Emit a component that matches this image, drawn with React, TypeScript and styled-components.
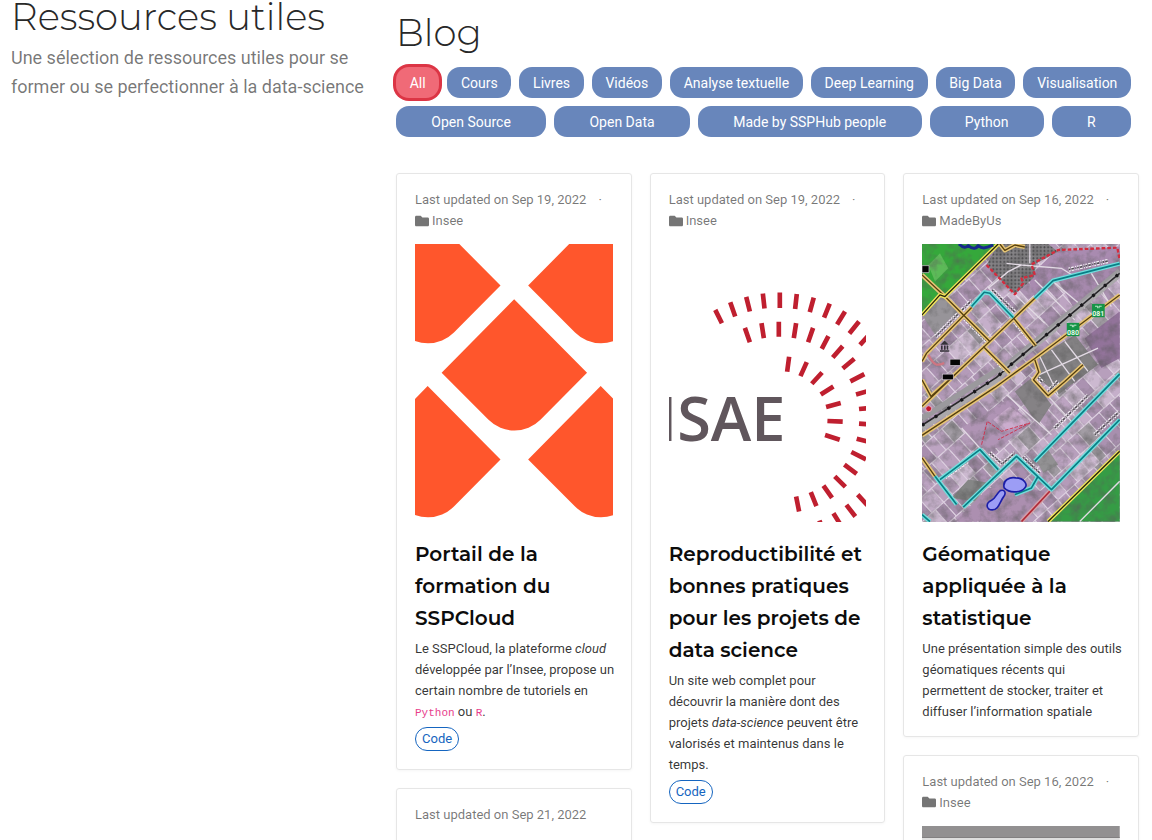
import React from 'react';
import styled, { createGlobalStyle } from 'styled-components';
import { FaFolder } from 'react-icons/fa';

const GlobalStyle = createGlobalStyle`
  *, *::before, *::after { box-sizing: border-box; }
  body {
    margin: 0;
    background: #fff;
    color: rgba(0, 0, 0, 0.8);
    font-family: Roboto, "Liberation Sans", sans-serif;
  }
`;

const headingFont = 'Montserrat, Inter, sans-serif';

const Page = styled.div`
  display: grid;
  grid-template-columns: minmax(0, 1fr) minmax(0, 2fr);
  align-items: start;
  height: 100vh;
  overflow: hidden;
`;

const Intro = styled.header`
  padding: 0 12px 0 11px;
`;

const Heading = styled.h1`
  margin: 0;
  font-family: ${headingFont};
  font-size: 37px;
  font-weight: 300;
  line-height: 34px;
  white-space: nowrap;
  color: #282828;
`;

const Subtitle = styled.p`
  margin: 9px 0 0;
  font-size: 18px;
  line-height: 29px;
  color: rgba(0, 0, 0, 0.54);
`;

const Main = styled.main`
  padding: 16px 13px 0 12px;
`;

const Toolbar = styled.div`
  display: flex;
  flex-wrap: wrap;
  gap: 8px;
  margin: 17px 8px 36px 0;
`;

const FilterButton = styled.button<{ $active?: boolean }>`
  flex: 1 1 auto;
  height: 31px;
  padding: 0 12px;
  border: 0;
  border-radius: 13px;
  background: ${(p) => (p.$active ? '#f06a77' : '#6886bb')};
  box-shadow: ${(p) => (p.$active ? '0 0 0 3px #dc3545' : 'none')};
  color: #fff;
  font: 400 14px/24px Roboto, "Liberation Sans", sans-serif;
  white-space: nowrap;
  cursor: pointer;
`;

const Columns = styled.div`
  display: grid;
  grid-template-columns: repeat(3, minmax(0, 1fr));
  align-items: start;
  gap: 18px;
`;

const Column = styled.div`
  display: flex;
  flex-direction: column;
  gap: 18px;
`;

const Card = styled.article`
  padding: 15px 18px 14px;
  border: 1px solid #e6e6e6;
  border-radius: 3px;
  box-shadow: 0 1px 3px rgba(0, 0, 0, 0.04);
`;

const Meta = styled.div`
  font-size: 13px;
  line-height: 21px;
  color: rgba(0, 0, 0, 0.54);
  white-space: nowrap;
`;

const Dot = styled.span`
  margin-left: 12px;
`;

const Category = styled.a`
  display: flex;
  align-items: center;
  gap: 3px;
  color: inherit;
  text-decoration: none;
`;

const Picture = styled.svg`
  display: block;
  width: 100%;
  height: auto;
  margin-top: 13px;
`;

const Title = styled.h3`
  margin: 16px 0 4px;
  font-family: ${headingFont};
  font-size: 20px;
  font-weight: 600;
  line-height: 32px;
  color: #0c0c0c;
`;

const Summary = styled.p`
  margin: 0 -6px 0 0;
  font-size: 13px;
  line-height: 21px;
`;

const Mono = styled.code`
  font-family: "Liberation Mono", monospace;
  font-size: 11px;
  line-height: 1;
  color: #e83e8c;
`;

const CodeLink = styled.a`
  display: block;
  width: fit-content;
  margin: 5px 0 4px;
  padding: 0 6px;
  border: 1px solid #1565c0;
  border-radius: 12px;
  font-size: 13px;
  line-height: 22px;
  color: #1565c0;
  text-decoration: none;
`;

const SspCloudLogo = () => (
  <Picture viewBox="75 237 594 834" role="img" aria-label="SSPCloud">
    {[[0, 0], [-260, -262], [260, -262], [-260, 261], [260, 261]].map(([x, y]) => (
      <path
        key={`${x},${y}`}
        transform={`translate(${x} ${y})`}
        fill="#ff562c"
        d="M373 403 L592 624 L452 765 A110 110 0 0 1 296 765 L155 624 Z"
      />
    ))}
  </Picture>
);

const rays = [
  // outer ring
  [211, 435, 231, 475], [256, 412, 271, 455], [304, 396, 315, 440], [354, 386, 359, 431],
  [405, 383, 405, 429], [456, 387, 451, 432], [507, 398, 495, 442], [555, 416, 538, 458],
  [601, 440, 577, 479], [643, 470, 614, 506], [675, 508, 646, 540],
  [668, 1022, 639, 990], [632, 1056, 605, 1021], [590, 1085, 566, 1046], [540, 1110, 524, 1068],
  // middle ring
  [300, 489, 315, 532], [350, 475, 357, 520], [402, 471, 402, 516], [454, 475, 447, 520],
  [505, 489, 490, 532], [551, 514, 531, 552], [594, 544, 564, 578], [629, 582, 594, 611],
  [659, 628, 617, 650], [680, 676, 634, 689], [690, 728, 643, 733], [690, 780, 643, 777],
  [682, 834, 636, 822], [664, 884, 620, 862], [636, 928, 599, 900], [602, 967, 570, 935],
  [562, 1000, 536, 963], [515, 1025, 498, 983], [463, 1041, 454, 996],
  // inner ring
  [433, 576, 427, 621], [486, 592, 467, 634], [532, 623, 501, 657], [566, 665, 528, 689],
  [588, 715, 544, 727], [594, 771, 548, 769], [585, 825, 541, 811],
];

const EnsaeLogo = () => (
  <Picture viewBox="72 237 594 834" role="img" aria-label="ENSAE">
    <path
      d={rays.map(([a, b, c, d]) => `M${a} ${b}L${c} ${d}`).join('')}
      stroke="#bf1f2f"
      strokeWidth="14"
      fill="none"
    />
    <text
      x="422"
      y="830"
      textAnchor="end"
      fill="#60565c"
      fontFamily='"Open Sans", sans-serif'
      fontSize="184"
      fontWeight="600"
    >
      NSAE
    </text>
  </Picture>
);

// Repeatable pseudo-random values for the land parcels of the map.
const makeRandom = (seed: number) => () => {
  seed = (seed * 16807) % 2147483647;
  return seed / 2147483647;
};

const buildParcels = () => {
  const random = makeRandom(77);
  const tones = ['#b49bb9', '#ab92b1', '#bda4c2', '#c5afca', '#a88fae', '#b79fbc', '#a39da5', '#ccb9d0'];
  const parcels: { x: number; y: number; w: number; h: number; fill: string }[] = [];
  for (let y = -672; y < 672; y += 56) {
    let x = -660;
    while (x < 660) {
      const w = 24 + Math.round(random() * 26);
      parcels.push({ x, y, w, h: 56, fill: tones[Math.floor(random() * tones.length)] });
      x += w;
    }
  }
  return parcels;
};

const parcels = buildParcels();

const yellowRoads = [
  'M21 120L90 185', 'M35 355L170 218', 'M35 355L21 380', 'M90 185L225 320', 'M130 410L360 190',
  'M130 410L21 515', 'M295 248L362 332', 'M205 335L285 415', 'M21 602L240 458L360 371L615 180',
  'M360 375L372 412L356 435L400 483L450 440L505 390', 'M21 435L48 485L130 410', 'M21 670L60 725',
  'M255 27L270 46L300 30L330 36',
];

const tealRoads = [
  'M170 215L208 172L225 175L295 248', 'M360 190L415 137L615 86', 'M615 418L360 680',
  'M615 555L410 765L305 665L145 818', 'M75 735L195 645L250 705', 'M60 725L125 810',
  'M370 725L350 760L300 780', 'M21 840L45 861',
];

// Street names too small to read: a speckled line along each street.
const streetNames = [
  'M62 305L172 195', 'M462 104L580 78', 'M150 252L222 325', 'M232 165L300 232', 'M300 262L345 315',
  'M90 728L160 678', 'M420 580L520 482', 'M540 600L615 530', 'M225 655L262 688L300 655',
  'M325 668L375 715', 'M215 345L270 405', 'M400 470L430 440', 'M370 430L385 445',
];

const GeoMap = () => (
  <Picture viewBox="21 27 594 834" role="img" aria-label="Carte">
    <defs>
      <filter id="aerial" x="0" y="0" width="100%" height="100%">
        <feTurbulence type="fractalNoise" baseFrequency="0.03" numOctaves="4" seed="8" />
        <feColorMatrix values="0 0 0 0 0.1  0 0 0 0 0.1  0 0 0 0 0.1  1.2 0 0 0 -0.48" />
      </filter>
      <pattern id="orchard" width="11" height="11" patternUnits="userSpaceOnUse">
        <rect width="11" height="11" fill="#858386" />
        <circle cx="4" cy="4" r="3" fill="#454447" />
      </pattern>
    </defs>
    <rect x="21" y="27" width="594" height="834" fill="#b49bb9" />
    <g transform="translate(318 444) rotate(-42)" stroke="#ddd0e0" strokeWidth="3">
      {parcels.map((p) => (
        <rect key={`${p.x},${p.y}`} x={p.x} y={p.y} width={p.w} height={p.h} fill={p.fill} />
      ))}
    </g>
    <path d="M420 50L615 35V90L420 135L360 190L340 130Z" fill="#a98bb0" />
    <path d="M430 135L615 88V120L480 225Z" fill="#a689ad" />
    <path d="M510 310L615 230V370L560 400Z" fill="#92739a" />
    <path d="M375 365L480 300L550 390L430 480L370 430Z" fill="#838183" />
    <path d="M300 470L350 430L410 510L370 570Z" fill="#858285" />
    <path d="M140 580L275 495L350 565L250 640L195 640Z" fill="#b094b5" />
    <path d="M235 555L285 515L350 565L270 590Z" fill="#cbadce" />
    <path d="M110 790L160 735L225 745L180 800Z" fill="#858686" />
    <path d="M365 680L400 645L430 690L385 715Z" fill="#929193" />
    <path d="M330 760L410 775L320 861H120L220 760Z" fill="#ac8fb0" />
    <path d="M21 240L80 185L135 220L60 300Z" fill="#979499" />
    <path d="M250 27H400L430 50L365 85L355 130L300 178L215 90Z" fill="url(#orchard)" />
    <path d="M21 27H250L90 185L75 180L21 235Z" fill="#35a83b" />
    <path d="M40 90L75 55L100 100L60 140Z" fill="#5cba58" />
    <path d="M615 650V861H400Z" fill="#359c45" />
    <rect x="21" y="27" width="594" height="834" filter="url(#aerial)" />

    <g fill="none" stroke="#e2dae4" strokeWidth="4">
      <path d="M360 135L480 255M415 140L510 220M300 178L390 265M480 225L615 110M530 115L590 215" />
      <path d="M275 85L320 90L440 100L480 125M345 27V85M220 160L280 110L320 90" />
      <path d="M375 365L430 480M410 345L480 440M450 320L520 410M350 430L550 340" />
      <path d="M275 480L410 600M140 580L240 690M350 430L470 560M615 740L495 861" />
    </g>
    <g fill="none">
      <path d="M21 552L225 420L290 380L615 108" stroke="#9b999d" strokeWidth="17" />
      <path d="M21 580L245 435L290 390L615 118" stroke="#aaa8ab" strokeWidth="18" />
      <path d="M21 572L245 428L290 388L615 115" stroke="#29272b" strokeWidth="5" />
      <path d="M21 572L245 428L290 388L615 115" stroke="#161518" strokeWidth="10" strokeDasharray="8 38" />
    </g>
    <g fill="none" strokeDasharray="5 3 8 4 3 3">
      <path d={streetNames.join('')} stroke="#f1ecf3" strokeWidth="13" />
      <path d={streetNames.join('')} stroke="#514c54" strokeWidth="5" />
    </g>
    <g fill="none" strokeLinejoin="round">
      <path d={yellowRoads.join('')} stroke="#e6c577" strokeWidth="13" />
      <path d={yellowRoads.join('')} stroke="#57400d" strokeWidth="4" />
      <path d={tealRoads.join('')} stroke="#72dedd" strokeWidth="13" />
      <path d={tealRoads.join('')} stroke="#087f86" strokeWidth="5" />
      <path d="M250 27L90 185L75 180L21 240M615 650L400 861" stroke="#f1e75a" strokeWidth="12" />
      <path d="M250 27L90 185L75 180L21 240M615 650L400 861" stroke="#28250c" strokeWidth="4" />
      <path d="M405 770L320 861" stroke="#d5a0a9" strokeWidth="13" />
      <path d="M405 770L320 861" stroke="#b12835" strokeWidth="5" />
      <path
        d="M215 90L300 178L325 145L320 130L360 120L350 88L430 45L608 38L615 75"
        stroke="#d32c3e"
        strokeWidth="7"
        strokeDasharray="11 6"
      />
      <path
        d="M200 630L217 560L260 590L345 565L250 615"
        stroke="#cc3552"
        strokeWidth="3"
        strokeDasharray="11 4"
      />
      <path d="M40 360C60 400 70 390 88 385" stroke="#cf7683" strokeWidth="7" />
      <path d="M132 27C145 40 155 38 160 32C175 45 185 40 190 32C205 45 220 36 235 30" stroke="#16288d" strokeWidth="9" />
    </g>
    <g fill="#9c9df5" stroke="#1b1ea8" strokeWidth="5">
      <path d="M268 760C262 735 285 727 303 730C328 730 340 750 330 760C318 774 285 778 268 760Z" />
      <path d="M256 768C270 764 275 775 266 787C255 800 252 826 232 826C212 825 212 805 230 797C244 790 246 775 256 768Z" />
    </g>
    <g>
      <rect x="532" y="207" width="38" height="40" fill="#159447" />
      <rect x="456" y="264" width="38" height="40" fill="#159447" />
      <path d="M541 214H549V220M553 220V214H561M465 271H473V277M477 277V271H485" fill="none" stroke="#bfe8cc" strokeWidth="3" />
      <g fill="#e6f8eb" fontFamily="Roboto, sans-serif" fontSize="21" fontWeight="700" textAnchor="middle">
        <text x="551" y="243">081</text>
        <text x="475" y="300">080</text>
      </g>
    </g>
    <g fill="#050505" stroke="#d6cad8" strokeWidth="2">
      <rect x="105" y="373" width="31" height="19" />
      <rect x="82" y="418" width="33" height="17" />
      <path d="M21 92H42V113H21Z" />
    </g>
    <path
      d="M76 330L89 317L102 330ZM78 332H83V345H78ZM87 332H92V345H87ZM95 332H100V345H95ZM75 346H103V351H75Z"
      fill="#343238"
    />
    <circle cx="41" cy="522" r="9" fill="#c5162d" stroke="#ddb7c6" strokeWidth="3" />
  </Picture>
);

const GreyPicture = () => (
  <Picture viewBox="0 0 198 278" role="img" aria-label="Aperçu">
    <rect width="198" height="278" fill="#dedede" />
    <rect width="198" height="12" fill="#929091" />
    <rect y="11" width="198" height="1" fill="#838182" />
  </Picture>
);

interface CardMetaProps {
  date: string;
  category?: string;
}

const CardMeta = ({ date, category }: CardMetaProps) => (
  <Meta>
    Last updated on {date}
    {category && (
      <>
        <Dot>·</Dot>
        <Category href="#">
          <FaFolder size={14} aria-hidden />
          {category}
        </Category>
      </>
    )}
  </Meta>
);

const filters = [
  'All', 'Cours', 'Livres', 'Vidéos', 'Analyse textuelle', 'Deep Learning', 'Big Data',
  'Visualisation', 'Open Source', 'Open Data', 'Made by SSPHub people', 'Python', 'R',
];

export default function App() {
  const [active, setActive] = React.useState('All');

  return (
    <>
      <GlobalStyle />
      <Page>
        <Intro>
          <Heading>Ressources utiles</Heading>
          <Subtitle>
            Une sélection de ressources utiles pour se former ou se perfectionner à la data-science
          </Subtitle>
        </Intro>
        <Main>
          <Heading as="h2">Blog</Heading>
          <Toolbar>
            {filters.map((name) => (
              <FilterButton
                key={name}
                type="button"
                $active={name === active}
                aria-pressed={name === active}
                onClick={() => setActive(name)}
              >
                {name}
              </FilterButton>
            ))}
          </Toolbar>
          <Columns>
            <Column>
              <Card>
                <CardMeta date="Sep 19, 2022" category="Insee" />
                <SspCloudLogo />
                <Title>Portail de la formation du SSPCloud</Title>
                <Summary>
                  Le SSPCloud, la plateforme <em>cloud</em> développée par l’Insee, propose un certain
                  nombre de tutoriels en <Mono>Python</Mono> ou <Mono>R</Mono>.
                </Summary>
                <CodeLink href="#">Code</CodeLink>
              </Card>
              <Card>
                <CardMeta date="Sep 21, 2022" />
                <Picture viewBox="0 0 198 278" aria-hidden />
              </Card>
            </Column>
            <Column>
              <Card>
                <CardMeta date="Sep 19, 2022" category="Insee" />
                <EnsaeLogo />
                <Title>Reproductibilité et bonnes pratiques pour les projets de data science</Title>
                <Summary>
                  Un site web complet pour découvrir la manière dont des projets <em>data-science</em>{' '}
                  peuvent être valorisés et maintenus dans le temps.
                </Summary>
                <CodeLink href="#">Code</CodeLink>
              </Card>
            </Column>
            <Column>
              <Card>
                <CardMeta date="Sep 16, 2022" category="MadeByUs" />
                <GeoMap />
                <Title>Géomatique appliquée à la statistique</Title>
                <Summary>
                  Une présentation simple des outils géomatiques récents qui permettent de stocker,
                  traiter et diffuser l’information spatiale
                </Summary>
              </Card>
              <Card>
                <CardMeta date="Sep 16, 2022" category="Insee" />
                <GreyPicture />
              </Card>
            </Column>
          </Columns>
        </Main>
      </Page>
    </>
  );
}
